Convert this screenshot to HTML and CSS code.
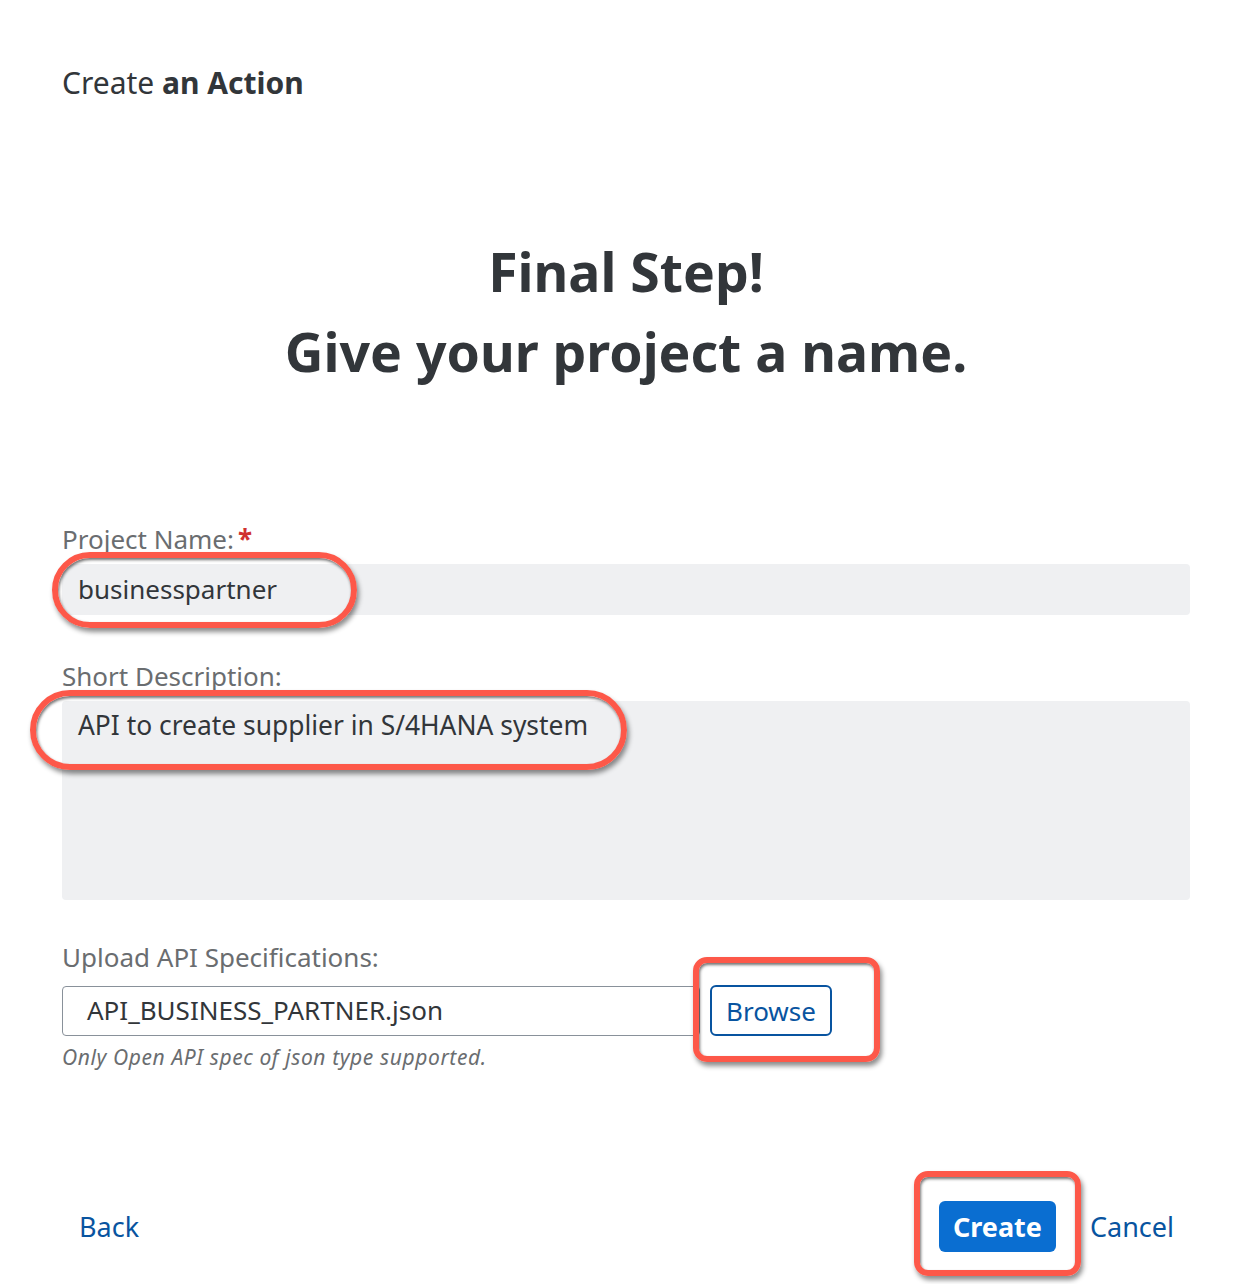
FILE: index.html
```html
<!DOCTYPE html>
<html>
<head>
<meta charset="utf-8">
<link rel="stylesheet" href="styles.css">
</head>
<body>
<div class="page">
  <header class="title">Create <b>an Action</b></header>
  <h1 class="hero">Final Step!<br>Give your project a name.</h1>
  <form class="form">
    <label class="label">Project Name:<span class="req">*</span></label>
    <div class="input">businesspartner</div>
    <label class="label label-desc">Short Description:</label>
    <div class="textarea">API to create supplier in S/4HANA system</div>
    <label class="label label-upload">Upload API Specifications:</label>
    <div class="upload-row">
      <div class="file-input">API_BUSINESS_PARTNER.json</div>
      <button type="button" class="btn-outline">Browse</button>
    </div>
    <div class="hint">Only Open API spec of json type supported.</div>
  </form>
  <footer class="footer">
    <a class="link back">Back</a>
    <div class="actions">
      <button type="button" class="btn-primary">Create</button>
      <a class="link cancel">Cancel</a>
    </div>
  </footer>
  <div class="mark mark-name"></div>
  <div class="mark mark-desc"></div>
  <div class="mark mark-browse"></div>
  <div class="mark mark-create"></div>
</div>
</body>
</html>
```
FILE: styles.css
```css
* { box-sizing: border-box; }
html, body { margin: 0; padding: 0; background: #fff; }
body { font-family: "Noto Sans", "Open Sans", sans-serif; color: #32363a; }
.page { position: relative; width: 1252px; height: 1284px; padding: 65px 62px 0 62px; overflow: hidden; }
.title { font-size: 30px; line-height: 36px; }
.title b { font-weight: 700; }
.hero { margin: 131px 0 0 0; text-align: center; font-size: 53.5px; line-height: 80px; font-weight: 700; color: #32363a; }
.form { display: flex; flex-direction: column; margin-top: 132px; width: 1128px; }
.label { font-size: 26px; line-height: 30px; color: #6a6d70; display: block; margin-bottom: 10px; }
.req { color: #d0312f; font-weight: 700; margin-left: 4px; }
.label-desc { margin-top: 46px; }
.label-upload { margin-top: 42px; margin-bottom: 13px; }
.input { height: 51px; background: #eff0f2; border-radius: 4px; padding: 0 16px; font-size: 26px; line-height: 50px; }
.textarea { height: 199px; background: #eff0f2; border-radius: 4px; padding: 7px 16px; font-size: 26.4px; line-height: 34px; }
.upload-row { display: flex; gap: 10px; align-items: center; }
.file-input { width: 638px; height: 50px; border: 1px solid #89919a; border-radius: 4px; padding: 0 24px; font-size: 26px; line-height: 46px; }
.btn-outline { width: 122px; height: 51px; border: 2px solid #0854a0; border-radius: 6px; background: #fff; color: #0854a0; font-family: inherit; font-size: 26px; line-height: 44px; padding: 0; }
.hint { margin-top: 10px; font-size: 21px; line-height: 22px; font-style: italic; color: #6a6d70; letter-spacing: 0.6px; }
.footer { display: flex; justify-content: space-between; align-items: center; margin-top: 133px; width: 1128px; }
.link { color: #0854a0; font-size: 27px; line-height: 36px; text-decoration: none; }
.back { padding-left: 17px; }
.actions { display: flex; align-items: center; gap: 34px; padding-right: 16px; }
.btn-primary { width: 117px; height: 51px; border: none; border-radius: 6px; background: #0a6ed1; color: #fff; font-family: inherit; font-weight: 700; font-size: 27px; line-height: 48px; padding: 0; }
.mark { position: absolute; border: 6px solid #fd5849; box-shadow: inset 1px 2px 3px rgba(0,0,0,0.55), 2px 4px 5px rgba(0,0,0,0.45); }
.mark-name { left: 52px; top: 552px; width: 305px; height: 76px; border-radius: 38px; }
.mark-desc { left: 30px; top: 690px; width: 597px; height: 80px; border-radius: 40px; }
.mark-browse { left: 693px; top: 957px; width: 187px; height: 105px; border-radius: 14px; }
.mark-create { left: 914px; top: 1171px; width: 167px; height: 105px; border-radius: 14px; }
```
